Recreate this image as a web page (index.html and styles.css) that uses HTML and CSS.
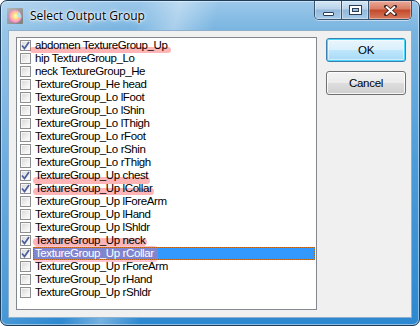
FILE: index.html
```html
<!DOCTYPE html>
<html lang="en">
<head>
    <meta charset="UTF-8">
    <title>Select Output Group</title>
    <link rel="stylesheet" href="styles.css">
</head>
<body>
<div class="window">
    <div class="titlebar">
        <svg class="app-icon" width="16" height="16" viewBox="0 0 16 16">
            <defs>
                <linearGradient id="iconBg" x1="0" y1="0" x2="1" y2="1">
                    <stop offset="0" stop-color="#b9b9b9"/>
                    <stop offset="1" stop-color="#7d7d7d"/>
                </linearGradient>
                <radialGradient id="ball" cx="0.55" cy="0.45" r="0.6">
                    <stop offset="0" stop-color="#fffbd0"/>
                    <stop offset="0.35" stop-color="#ffe07a"/>
                    <stop offset="0.7" stop-color="#ff9ec8"/>
                    <stop offset="1" stop-color="#e86cc0"/>
                </radialGradient>
            </defs>
            <rect x="0" y="0" width="16" height="16" rx="1" fill="url(#iconBg)"/>
            <circle cx="8" cy="8.5" r="6.5" fill="url(#ball)"/>
            <path d="M10 3.5 A6.5 6.5 0 0 1 14.3 10 L11 9 Z" fill="#9fe8ff" opacity="0.8"/>
        </svg>
        <span class="title">Select Output Group</span>
        <div class="caption-buttons">
            <div class="cap cap-min"><span class="glyph-min"></span></div>
            <div class="cap cap-max"><span class="glyph-max"></span></div>
            <div class="cap cap-close">
                <svg width="13" height="11" viewBox="0 0 13 11">
                    <path d="M2 1.5 L11 9.5 M11 1.5 L2 9.5" stroke="#3b2320" stroke-width="3.6" stroke-linecap="square"/>
                    <path d="M2 1.5 L11 9.5 M11 1.5 L2 9.5" stroke="#ffffff" stroke-width="2"/>
                </svg>
            </div>
        </div>
    </div>
    <div class="client">
        <div class="listbox">
            <div class="row"><span class="check checked"><svg width="9" height="9" viewBox="0 0 9 9"><path d="M1 4.5 L3.5 7.5 L8 1" fill="none" stroke="#4a5e9e" stroke-width="1.7"/></svg></span><span class="label"><span class="text mark mark-wide">abdomen TextureGroup_Up</span></span></div>
            <div class="row"><span class="check"></span><span class="label"><span class="text">hip TextureGroup_Lo</span></span></div>
            <div class="row"><span class="check"></span><span class="label"><span class="text">neck TextureGroup_He</span></span></div>
            <div class="row"><span class="check"></span><span class="label"><span class="text">TextureGroup_He head</span></span></div>
            <div class="row"><span class="check"></span><span class="label"><span class="text">TextureGroup_Lo lFoot</span></span></div>
            <div class="row"><span class="check"></span><span class="label"><span class="text">TextureGroup_Lo lShin</span></span></div>
            <div class="row"><span class="check"></span><span class="label"><span class="text">TextureGroup_Lo lThigh</span></span></div>
            <div class="row"><span class="check"></span><span class="label"><span class="text">TextureGroup_Lo rFoot</span></span></div>
            <div class="row"><span class="check"></span><span class="label"><span class="text">TextureGroup_Lo rShin</span></span></div>
            <div class="row"><span class="check"></span><span class="label"><span class="text">TextureGroup_Lo rThigh</span></span></div>
            <div class="row"><span class="check checked"><svg width="9" height="9" viewBox="0 0 9 9"><path d="M1 4.5 L3.5 7.5 L8 1" fill="none" stroke="#4a5e9e" stroke-width="1.7"/></svg></span><span class="label"><span class="text mark">TextureGroup_Up chest</span></span></div>
            <div class="row"><span class="check checked"><svg width="9" height="9" viewBox="0 0 9 9"><path d="M1 4.5 L3.5 7.5 L8 1" fill="none" stroke="#4a5e9e" stroke-width="1.7"/></svg></span><span class="label"><span class="text mark mark-mid">TextureGroup_Up lCollar</span></span></div>
            <div class="row"><span class="check"></span><span class="label"><span class="text">TextureGroup_Up lForeArm</span></span></div>
            <div class="row"><span class="check"></span><span class="label"><span class="text">TextureGroup_Up lHand</span></span></div>
            <div class="row"><span class="check"></span><span class="label"><span class="text">TextureGroup_Up lShldr</span></span></div>
            <div class="row"><span class="check checked"><svg width="9" height="9" viewBox="0 0 9 9"><path d="M1 4.5 L3.5 7.5 L8 1" fill="none" stroke="#4a5e9e" stroke-width="1.7"/></svg></span><span class="label"><span class="text mark mark-high">TextureGroup_Up neck</span></span></div>
            <div class="row"><span class="check checked"><svg width="9" height="9" viewBox="0 0 9 9"><path d="M1 4.5 L3.5 7.5 L8 1" fill="none" stroke="#4a5e9e" stroke-width="1.7"/></svg></span><span class="label selected"><span class="text mark mark-full">TextureGroup_Up rCollar</span></span></div>
            <div class="row"><span class="check"></span><span class="label"><span class="text">TextureGroup_Up rForeArm</span></span></div>
            <div class="row"><span class="check"></span><span class="label"><span class="text">TextureGroup_Up rHand</span></span></div>
            <div class="row"><span class="check"></span><span class="label"><span class="text">TextureGroup_Up rShldr</span></span></div>
        </div>
        <div class="actions">
            <button class="btn btn-default">OK</button>
            <button class="btn">Cancel</button>
        </div>
    </div>
</div>
</body>
</html>
```

FILE: styles.css
```css
html, body {
    margin: 0;
    padding: 0;
    background: #ffffff;
}

.window {
    box-sizing: border-box;
    width: 420px;
    height: 326px;
    border: 1px solid #1d3c5a;
    border-radius: 7px;
    box-shadow: inset 0 0 0 1px rgba(255, 255, 255, 0.45);
    background:
        linear-gradient(104deg, rgba(255,255,255,0) 28%, rgba(255,255,255,0.35) 36%, rgba(255,255,255,0) 44%),
        linear-gradient(100deg, rgba(255,255,255,0.25) 0%, rgba(255,255,255,0) 25%),
        linear-gradient(180deg, #9cc8ea 0, #78b4e0 30px, #4d9cd9 160px, #2c88d0 100%);
    display: flex;
    flex-direction: column;
    overflow: hidden;
}

/* title bar */
.titlebar {
    height: 29px;
    display: flex;
    align-items: center;
    padding-left: 6px;
    padding-right: 7px;
    position: relative;
}

.app-icon {
    flex: none;
    margin-top: 1px;
}

.title {
    margin-left: 7px;
    font-family: "Open Sans", "Noto Sans", sans-serif;
    font-size: 12px;
    color: #000;
    text-shadow: 0 0 6px #fff, 0 0 3px #fff, 0 0 2px #fff;
}

.caption-buttons {
    margin-left: auto;
    align-self: flex-start;
    display: flex;
    height: 18px;
    border: 1px solid #3a5470;
    border-top: none;
    border-radius: 0 0 5px 5px;
    overflow: hidden;
    box-shadow: 0 1px 0 rgba(255,255,255,0.5);
}

.cap {
    height: 18px;
    display: flex;
    align-items: center;
    justify-content: center;
    box-shadow: inset 0 0 0 1px rgba(255,255,255,0.35);
}

.cap-min,
.cap-max {
    width: 26px;
    border-right: 1px solid #3a5470;
    background: linear-gradient(180deg, #d6e7f5 0%, #b8d2ea 45%, #93b8da 50%, #a7cae8 100%);
}

.cap-close {
    width: 42px;
    background: linear-gradient(180deg, #e9aa9c 0%, #d87c62 45%, #c2482b 50%, #d77a5c 100%);
}

.glyph-min {
    width: 9px;
    height: 2px;
    margin-top: 7px;
    background: #fff;
    border: 1px solid #2c3e55;
    border-radius: 1px;
}

.glyph-max {
    width: 7px;
    height: 4px;
    border: 2px solid #fff;
    outline: 1px solid #2c3e55;
    box-shadow: inset 0 0 0 1px #2c3e55;
}

/* client area */
.client {
    box-sizing: border-box;
    height: 288px;
    margin: 0 7px;
    border: 1px solid #8fb0cc;
    background: #f0f0f0;
    padding: 6px 0 0 7px;
    display: flex;
    align-items: flex-start;
}

.listbox {
    box-sizing: border-box;
    width: 301px;
    height: 273px;
    border: 1px solid #828790;
    background: #fff;
    padding-top: 1px;
    font-family: "Liberation Sans", Arial, sans-serif;
    font-size: 11.5px;
    letter-spacing: -0.4px;
    color: #000;
}

.row {
    display: flex;
    align-items: center;
    height: 13px;
}

.check {
    box-sizing: border-box;
    flex: none;
    width: 11px;
    height: 11px;
    margin-left: 3px;
    margin-right: 2px;
    border: 1px solid #8f8f8f;
    background: linear-gradient(135deg, #d6d6d6 0%, #f4f4f4 70%, #ffffff 100%);
    box-shadow: inset 0 0 0 1px #f6f6f6;
    display: flex;
    align-items: center;
    justify-content: center;
}

.check svg {
    margin-top: -1px;
}

.label {
    flex: 1;
    height: 13px;
    line-height: 13px;
    margin-right: 1px;
    padding: 0 2px;
    position: relative;
    z-index: 0;
    white-space: nowrap;
}

.label.selected {
    background: #3399ff;
    color: #fff;
    outline: 1px dotted #b85f10;
    outline-offset: -1px;
}

.text {
    display: inline-block;
    position: relative;
}

/* marker highlight drawn over checked items */
.mark::after {
    content: '';
    position: absolute;
    left: -2px;
    right: -2px;
    top: 8px;
    height: 7px;
    border-radius: 4px;
    background: rgba(255, 90, 90, 0.45);
    filter: blur(0.5px);
    z-index: -1;
}

.mark-wide::after {
    left: -5px;
    right: -3px;
    top: 8px;
    height: 6px;
}

.mark-mid::after {
    top: 6px;
}

.mark-high::after {
    top: 4px;
    height: 8px;
}

.mark-full::after {
    top: -1px;
    height: 16px;
    right: -4px;
    background: rgba(255, 100, 130, 0.38);
}

/* buttons */
.actions {
    display: flex;
    flex-direction: column;
    gap: 9px;
    margin-left: 9px;
    margin-top: 1px;
}

.btn {
    box-sizing: border-box;
    width: 80px;
    height: 24px;
    border: 1px solid #707070;
    border-radius: 3px;
    background: linear-gradient(180deg, #f3f3f3 0%, #ebebeb 48%, #dddddd 52%, #cfcfcf 100%);
    box-shadow: inset 0 0 0 1px rgba(255,255,255,0.8);
    font-family: "Liberation Sans", Arial, sans-serif;
    font-size: 11.5px;
    letter-spacing: -0.3px;
    color: #000;
    padding: 0;
}

.btn-default {
    border-color: #3c7fb1;
    background: linear-gradient(180deg, #eaf6fd 0%, #d9f0fc 48%, #bee6fd 52%, #a7d9f5 100%);
    box-shadow: inset 0 0 0 1px #48d8fb, inset 0 0 0 2px rgba(255,255,255,0.5);
}
```
